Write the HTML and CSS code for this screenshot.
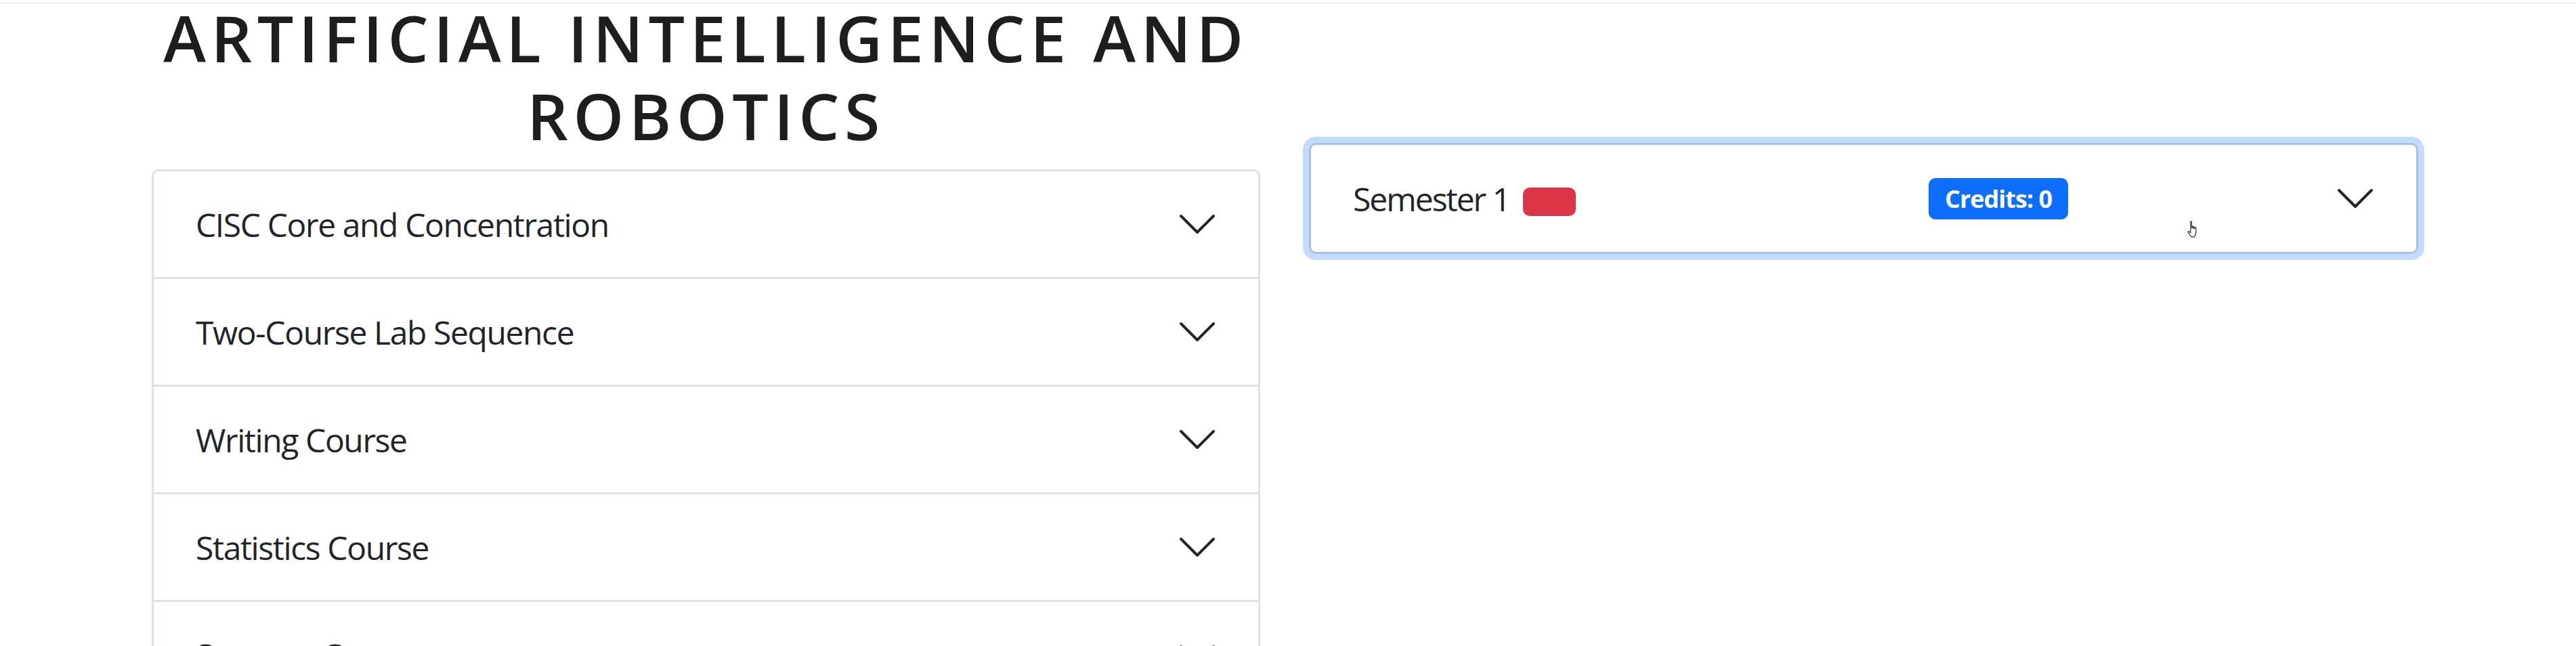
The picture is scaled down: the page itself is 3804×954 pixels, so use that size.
FILE: index.html
```html
<!DOCTYPE html>
<html lang="en">
<head>
<meta charset="utf-8">
<title>Artificial Intelligence and Robotics</title>
<link rel="stylesheet" href="styles.css">
</head>
<body>
<div class="topbar"></div>
<main class="page">
  <section class="col-main">
    <h1 class="title">ARTIFICIAL INTELLIGENCE AND ROBOTICS</h1>
    <div class="accordion">
      <div class="acc-item">
        <button class="acc-btn" type="button"><span>CISC Core and Concentration</span>
          <svg class="chev" viewBox="0 0 16 16"><path d="M2 5L8 11L14 5"/></svg></button>
      </div>
      <div class="acc-item">
        <button class="acc-btn" type="button"><span>Two-Course Lab Sequence</span>
          <svg class="chev" viewBox="0 0 16 16"><path d="M2 5L8 11L14 5"/></svg></button>
      </div>
      <div class="acc-item">
        <button class="acc-btn" type="button"><span>Writing Course</span>
          <svg class="chev" viewBox="0 0 16 16"><path d="M2 5L8 11L14 5"/></svg></button>
      </div>
      <div class="acc-item">
        <button class="acc-btn" type="button"><span>Statistics Course</span>
          <svg class="chev" viewBox="0 0 16 16"><path d="M2 5L8 11L14 5"/></svg></button>
      </div>
      <div class="acc-item">
        <button class="acc-btn" type="button"><span>Systems Course</span>
          <svg class="chev" viewBox="0 0 16 16"><path d="M2 5L8 11L14 5"/></svg></button>
      </div>
    </div>
  </section>
  <section class="col-side">
    <div class="semester">
      <div class="sem-btn">
        <div class="sem-title"><span>Semester 1</span><span class="badge-red"></span></div>
        <span class="badge-credits">Credits: 0</span>
        <span class="spacer"></span>
        <svg class="chev" viewBox="0 0 16 16"><path d="M2 5L8 11L14 5"/></svg>
      </div>
      <svg class="cursor" viewBox="0 0 18 24"><path d="M6 1.8c0-1 1.6-1 1.6 0V10h.4V8.2c0-1 1.6-1 1.6 0V10.4h.4V9c0-1 1.6-1 1.6 0v1.8h.4V10c0-1 1.6-1 1.6 0v5.5c0 3-1.4 5-2.8 6.5H7.2C6 20.6 4.4 18.6 2.8 16c-.8-1.3.6-2.3 1.5-1.3L6 16.6Z"/></svg>
    </div>
  </section>
</main>
</body>
</html>
```

FILE: styles.css
```css
html, body {
  margin: 0;
  padding: 0;
  background: #ffffff;
}

body {
  font-family: "Open Sans", "Noto Sans", sans-serif;
  color: #212529;
  height: 954px;
  overflow: hidden;
}

.topbar {
  height: 4px;
  border-bottom: 1px solid #dee2e6;
}

.page {
  display: flex;
  align-items: flex-start;
  gap: 72px;
  padding-left: 224px;
}

.col-main {
  flex: none;
  width: 1637px;
}

.title {
  margin: -7px 0 22px;
  font-size: 95px;
  line-height: 115px;
  font-weight: 600;
  letter-spacing: 7.6px;
  text-align: center;
  color: #1e1e1e;
}

.accordion {
  border: 3px solid #dee2e6;
  border-radius: 10px;
  overflow: hidden;
}

.acc-item + .acc-item {
  border-top: 3px solid #dee2e6;
}

.acc-btn {
  box-sizing: border-box;
  display: flex;
  align-items: center;
  justify-content: space-between;
  width: 100%;
  height: 156px;
  padding: 0 58px 0 62px;
  border: 0;
  background: transparent;
  font-family: inherit;
  font-size: 48px;
  letter-spacing: -1.4px;
  color: #212529;
  text-align: left;
}

.chev {
  flex: none;
  width: 64px;
  height: 64px;
}

.chev path {
  fill: none;
  stroke: #212529;
  stroke-width: 1;
  stroke-linecap: round;
  stroke-linejoin: round;
}

.col-side {
  flex: none;
  width: 1638px;
  margin-top: 206px;
}

.semester {
  position: relative;
  border: 3px solid #a7c0e3;
  border-radius: 10px;
  box-shadow: 0 0 0 9px #c3dbfe;
}

.sem-btn {
  display: flex;
  align-items: center;
  height: 158px;
  padding: 0 58px 0 62px;
}

.sem-title {
  flex: 0 0 850px;
  display: flex;
  align-items: center;
  font-size: 48px;
  letter-spacing: -2px;
}

.badge-red {
  display: inline-block;
  width: 78px;
  height: 42px;
  margin: 10px 0 0 20px;
  border-radius: 10px;
  background: #dc3545;
}

.badge-credits {
  display: inline-flex;
  align-items: center;
  justify-content: center;
  box-sizing: border-box;
  width: 206px;
  height: 61px;
  border-radius: 10px;
  background: #0d6efd;
  color: #ffffff;
  font-size: 36px;
  font-weight: 700;
  letter-spacing: -1px;
}

.spacer {
  flex: 1;
}

.cursor {
  position: absolute;
  left: 1292px;
  top: 112px;
  width: 20px;
  height: 26px;
}

.cursor path {
  fill: #ffffff;
  stroke: #1a1a1a;
  stroke-width: 1;
  stroke-linejoin: round;
}
```
